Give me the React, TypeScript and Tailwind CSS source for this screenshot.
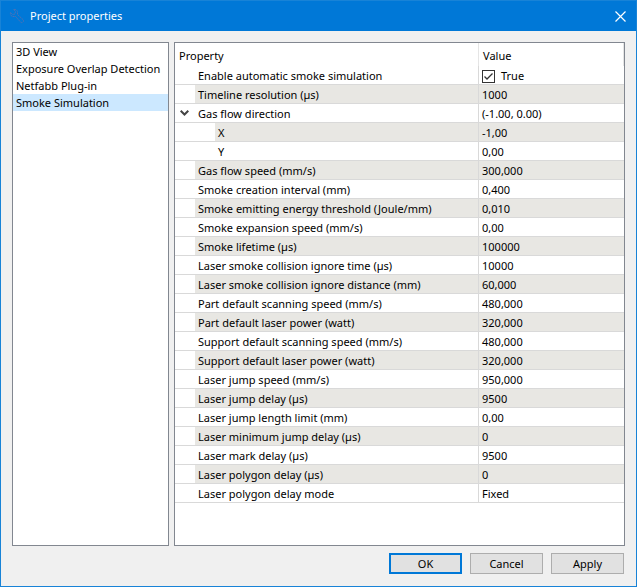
import { useState } from 'react';

interface PropertyRow {
  name: string;
  value: string;
  type?: 'check' | 'group' | 'child';
}

const pages = [
  '3D View',
  'Exposure Overlap Detection',
  'Netfabb Plug-in',
  'Smoke Simulation',
];

const rows: PropertyRow[] = [
  { name: 'Enable automatic smoke simulation', value: 'True', type: 'check' },
  { name: 'Timeline resolution (µs)', value: '1000' },
  { name: 'Gas flow direction', value: '(-1.00, 0.00)', type: 'group' },
  { name: 'X', value: '-1,00', type: 'child' },
  { name: 'Y', value: '0,00', type: 'child' },
  { name: 'Gas flow speed (mm/s)', value: '300,000' },
  { name: 'Smoke creation interval (mm)', value: '0,400' },
  { name: 'Smoke emitting energy threshold (Joule/mm)', value: '0,010' },
  { name: 'Smoke expansion speed (mm/s)', value: '0,00' },
  { name: 'Smoke lifetime (µs)', value: '100000' },
  { name: 'Laser smoke collision ignore time (µs)', value: '10000' },
  { name: 'Laser smoke collision ignore distance (mm)', value: '60,000' },
  { name: 'Part default scanning speed (mm/s)', value: '480,000' },
  { name: 'Part default laser power (watt)', value: '320,000' },
  { name: 'Support default scanning speed (mm/s)', value: '480,000' },
  { name: 'Support default laser power (watt)', value: '320,000' },
  { name: 'Laser jump speed (mm/s)', value: '950,000' },
  { name: 'Laser jump delay (µs)', value: '9500' },
  { name: 'Laser jump length limit (mm)', value: '0,00' },
  { name: 'Laser minimum jump delay (µs)', value: '0' },
  { name: 'Laser mark delay (µs)', value: '9500' },
  { name: 'Laser polygon delay (µs)', value: '0' },
  { name: 'Laser polygon delay mode', value: 'Fixed' },
];

const TitleBar = () => (
  <header className="flex h-[30px] items-center bg-[#0078d7] pl-2 text-white">
    <svg
      width="16"
      height="16"
      viewBox="0 0 16 16"
      fill="none"
      stroke="#4a72b8"
      strokeDasharray="2 0.6"
      aria-hidden="true"
    >
      <path d="M4.5 1.5 6.5 3.5 6 6 3.500 6.500 1.500 4.500C1 6 2 8 3.500 8.500H6.500L12 14.500C13 15 15 14 14.500 12L8.500 6.500V3.500C8 2 6 1 4.500 1.500Z" />
    </svg>
    <h1 className="ml-[5px] flex-1">Project properties</h1>
    <button
      type="button"
      aria-label="Close"
      className="flex h-full w-[31px] items-center justify-center"
    >
      <svg width="11" height="11" viewBox="0 0 11 11" stroke="#fff" strokeWidth="1.2">
        <path d="M.5 .5 10.5 10.5M10.5 .5 .5 10.5" />
      </svg>
    </button>
  </header>
);

const PageList = () => {
  const [selected, setSelected] = useState('Smoke Simulation');

  return (
    <nav className="w-[157px] shrink-0 border border-[#828790] bg-white">
      {pages.map((page) => (
        <button
          key={page}
          type="button"
          onClick={() => setSelected(page)}
          className={`block h-[17px] w-full pl-[3px] text-left leading-[17px] whitespace-nowrap ${
            page === selected ? 'bg-[#cce8ff]' : ''
          }`}
        >
          {page}
        </button>
      ))}
    </nav>
  );
};

const CheckValue = (props: { label: string }) => {
  const [checked, setChecked] = useState(true);

  return (
    <label className="flex items-center gap-[6px]">
      <span className="grid">
        <input
          type="checkbox"
          checked={checked}
          onChange={() => setChecked(!checked)}
          className="col-start-1 row-start-1 size-[13px] appearance-none border border-[#333] bg-white"
        />
        {checked && (
          <svg
            width="13"
            height="13"
            viewBox="0 0 13 13"
            fill="none"
            stroke="#333"
            strokeWidth="1.3"
            className="pointer-events-none col-start-1 row-start-1"
          >
            <path d="M2.5 6.5 5 9 10.5 3.5" />
          </svg>
        )}
      </span>
      {checked ? props.label : 'False'}
    </label>
  );
};

const PropertyTable = () => {
  const [open, setOpen] = useState(true);
  const visible = rows.filter((row) => open || row.type !== 'child');

  return (
    <div className="min-w-0 flex-1 border border-[#828790] bg-white">
      <table className="w-full table-fixed border-separate border-spacing-0 text-left">
        <thead>
          <tr className="h-[23px] leading-4">
            <th className="w-[304px] border-r border-[#e5e5e5] p-0 pt-0.5 pl-1 font-normal">
              Property
            </th>
            <th className="border-r border-[#e5e5e5] p-0 pt-0.5 pl-1 font-normal">
              Value
            </th>
          </tr>
        </thead>
        <tbody>
          {visible.map((row, i) => {
            const shade = i % 2 === 1 ? 'bg-[#e8e7e3]' : '';
            return (
              <tr key={row.name} className="h-[19px] leading-4">
                <td className="border-r border-b border-[#d9d9d9] p-0">
                  <div className="flex h-[18px]">
                    <div
                      className={`flex shrink-0 ${row.type === 'child' ? 'w-10' : 'w-5'}`}
                    >
                      {row.type === 'group' && (
                        <button
                          type="button"
                          aria-label="Toggle group"
                          onClick={() => setOpen(!open)}
                          className="flex w-[19px] items-center justify-center"
                        >
                          <svg
                            width="9"
                            height="6"
                            viewBox="0 0 9 6"
                            fill="none"
                            stroke="#444"
                            strokeWidth="2"
                            className={open ? '' : '-rotate-90'}
                          >
                            <path d="M.7 .8 4.5 4.5 8.3 .8" />
                          </svg>
                        </button>
                      )}
                    </div>
                    <div className={`flex-1 truncate pt-0.5 pl-[3px] ${shade}`}>
                      {row.name}
                    </div>
                  </div>
                </td>
                <td
                  className={`border-b border-[#d9d9d9] p-0 pt-0.5 pl-[3px] ${shade}`}
                >
                  {row.type === 'check' ? (
                    <CheckValue label={row.value} />
                  ) : (
                    row.value
                  )}
                </td>
              </tr>
            );
          })}
        </tbody>
      </table>
    </div>
  );
};

export default function App() {
  return (
    <div className="flex min-h-screen flex-col border border-[#1883d7] bg-[#f0f0f0] font-['Noto_Sans','Open_Sans',sans-serif] text-[11px] text-black">
      <TitleBar />
      <main className="flex flex-1 gap-[5px] px-[11px] pt-[11px]">
        <PageList />
        <PropertyTable />
      </main>
      <footer className="flex justify-end gap-2 px-3 pt-[7px] pb-3">
        <button
          type="button"
          className="h-[21px] w-[73px] border-2 border-[#0078d7] bg-[#e1e1e1] leading-[17px]"
        >
          OK
        </button>
        <button
          type="button"
          className="h-[21px] w-[73px] border border-[#adadad] bg-[#e1e1e1] leading-[19px]"
        >
          Cancel
        </button>
        <button
          type="button"
          className="h-[21px] w-[73px] border border-[#adadad] bg-[#e1e1e1] leading-[19px]"
        >
          Apply
        </button>
      </footer>
    </div>
  );
}
